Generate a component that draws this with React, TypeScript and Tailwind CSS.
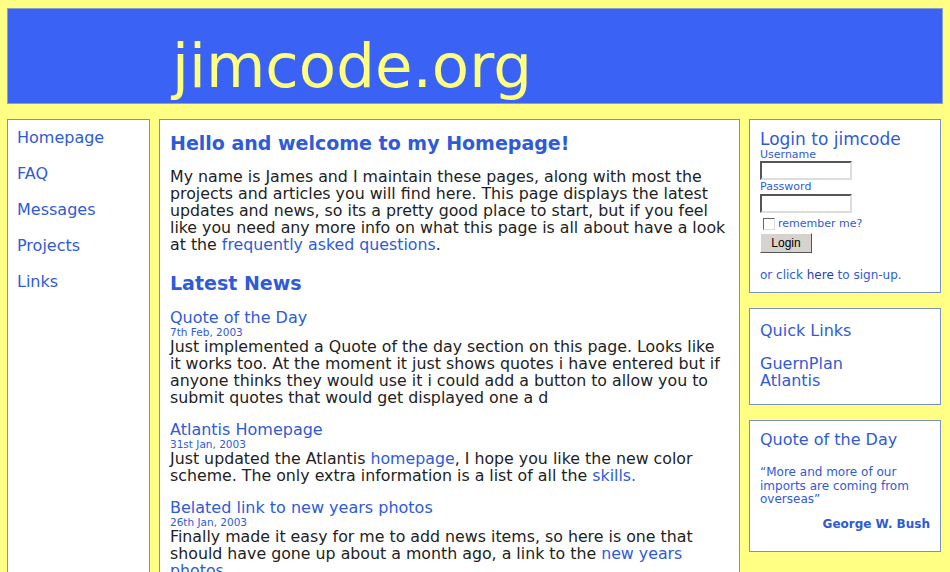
import React from 'react';

const font = "font-['DejaVu_Sans',Verdana,sans-serif]";

const NavLink = ({ label }: { label: string }) => (
  <a className="block text-[16px] leading-[20px] text-[#2f5ad8]">{label}</a>
);

const Box = ({ children, className = '' }: { children: React.ReactNode; className?: string }) => (
  <div className={`bg-white border border-[#7a92bd] ${className}`}>{children}</div>
);

const NewsItem = ({ title, date, children }: { title: string; date: string; children: React.ReactNode }) => (
  <div className="mb-[14px]">
    <div className="text-[16px] leading-[19px] text-[#2f5ad8]">{title}</div>
    <div className="text-[10.5px] leading-[11px] text-[#2f5ad8]">{date}</div>
    <p className="text-[15.8px] leading-[17px] text-[#222]">{children}</p>
  </div>
);

export default function App() {
  return (
    <div className={`${font} bg-[#ffff84] h-[572px] overflow-hidden p-[7px] pt-[8px]`}>
      {/* Header */}
      <div className="bg-[#3a63f5] h-[96px] border border-[#8aa0c8] pl-[164px] pt-[22px]">
        <span className="block text-[61px] leading-[70px] text-[#ffff80]">jimcode.org</span>
      </div>

      <div className="flex gap-[9px] mt-[15px] items-start">
        {/* Left nav */}
        <Box className="w-[143px] h-[460px] pl-[9px] pt-[8px] flex flex-col gap-[16px]">
          <NavLink label="Homepage" />
          <NavLink label="FAQ" />
          <NavLink label="Messages" />
          <NavLink label="Projects" />
          <NavLink label="Links" />
        </Box>

        {/* Main content */}
        <Box className="w-[581px] h-[460px] pl-[10px] pr-[12px] pt-[10px]">
          <h1 className="text-[19px] leading-[26px] font-bold text-[#2f5ad8]">Hello and welcome to my Homepage!</h1>
          <p className="mt-[12px] text-[15.8px] leading-[17px] text-[#222]">
            My name is James and I maintain these pages, along with most the projects and articles you will find here. This page displays the latest updates and news, so its a pretty good place to start, but if you feel like you need any more info on what this page is all about have a look at the <a className="text-[#2f5ad8]">frequently asked questions</a>.
          </p>
          <h2 className="mt-[17px] text-[19px] leading-[26px] font-bold text-[#2f5ad8]">Latest News</h2>
          <div className="mt-[12px]">
            <NewsItem title="Quote of the Day" date="7th Feb, 2003">
              Just implemented a Quote of the day section on this page. Looks like it works too. At the moment it just shows quotes i have entered but if anyone thinks they would use it i could add a button to allow you to submit quotes that would get displayed one a d
            </NewsItem>
            <NewsItem title="Atlantis Homepage" date="31st Jan, 2003">
              Just updated the Atlantis <a className="text-[#2f5ad8]">homepage</a>, I hope you like the new color scheme. The only extra information is a list of all the <a className="text-[#2f5ad8]">skills.</a>
            </NewsItem>
            <NewsItem title="Belated link to new years photos" date="26th Jan, 2003">
              Finally made it easy for me to add news items, so here is one that should have gone up about a month ago, a link to the <a className="text-[#2f5ad8]">new years photos</a>
            </NewsItem>
          </div>
        </Box>

        {/* Right column */}
        <div className="w-[192px] flex flex-col gap-[15px]">
          <Box className="h-[174px] pl-[10px] pt-[9px]">
            <div className="text-[17px] leading-[20px] text-[#2f5ad8]">Login to jimcode</div>
            <div className="text-[11px] leading-[12px] text-[#2f5ad8]">Username</div>
            <input className="block w-[92px] h-[19px] border-2 border-t-[#555] border-l-[#555] border-b-[#ddd] border-r-[#ddd] bg-white" />
            <div className="mt-[1px] text-[11px] leading-[12px] text-[#2f5ad8]">Password</div>
            <input type="password" className="block mt-[1px] w-[92px] h-[19px] border-2 border-t-[#555] border-l-[#555] border-b-[#ddd] border-r-[#ddd] bg-white" />
            <div className="flex items-center mt-[4px] ml-[3px] gap-[3px]">
              <span className="w-[12px] h-[12px] border border-t-[#666] border-l-[#666] border-b-[#ddd] border-r-[#ddd] bg-white" />
              <span className="text-[11px] leading-[14px] text-[#2f5ad8]">remember me?</span>
            </div>
            <button className="block mt-[2px] w-[52px] h-[20px] bg-[#d6d3ce] border border-t-[#fff] border-l-[#fff] border-b-[#555] border-r-[#555] text-[12px] leading-[16px] text-black font-['Liberation_Sans',sans-serif]">Login</button>
            <div className="mt-[15px] text-[12px] leading-[14px] text-[#2f5ad8]">
              or click <a className="text-[#1d3fb0]">here</a> to sign-up.
            </div>
          </Box>

          <Box className="h-[97px] pl-[10px] pt-[12px]">
            <div className="text-[16px] leading-[20px] text-[#2f5ad8]">Quick Links</div>
            <div className="mt-[14px] text-[16px] leading-[17px] text-[#2f5ad8]">
              <div>GuernPlan</div>
              <div>Atlantis</div>
            </div>
          </Box>

          <Box className="h-[132px] pl-[10px] pr-[10px] pt-[8px]">
            <div className="text-[16px] leading-[22px] text-[#2f5ad8]">Quote of the Day</div>
            <p className="mt-[15px] text-[12px] leading-[13.5px] text-[#2f5ad8]">“More and more of our imports are coming from overseas”</p>
            <div className="mt-[10px] text-right text-[12px] leading-[14px] font-bold text-[#2f5ad8]">George W. Bush</div>
          </Box>
        </div>
      </div>
    </div>
  );
}
